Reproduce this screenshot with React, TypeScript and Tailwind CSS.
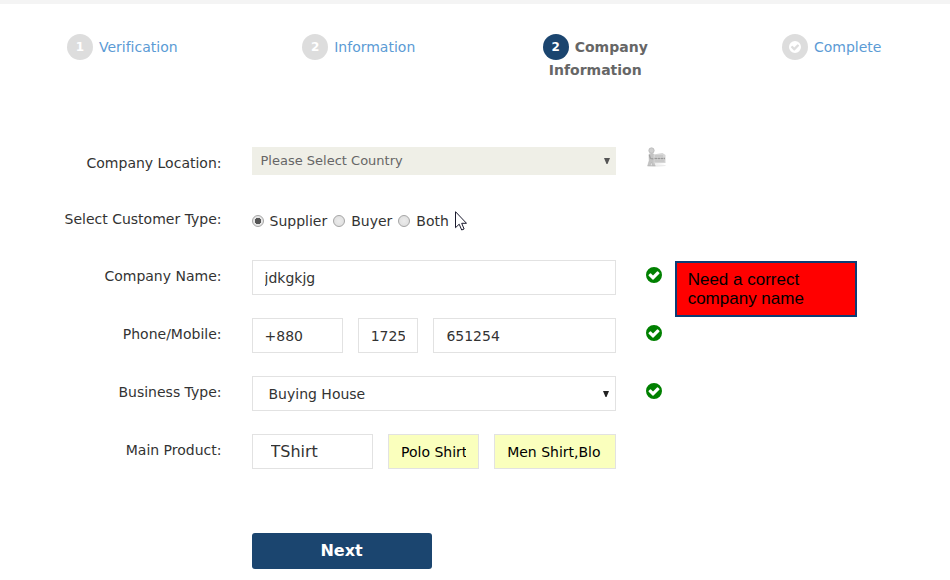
import type { ReactNode } from "react";
import clsx from "clsx";

function CheckBadge({ className }: { className: string }) {
  return (
    <svg viewBox="0 0 16 16" className={className} aria-hidden="true">
      <path
        fill="currentColor"
        fillRule="evenodd"
        d="M8 0a8 8 0 1 1 0 16A8 8 0 0 1 8 0Zm5.300 5.800-1.300-1.300a.7.7 0 0 0-1 0L7 8.500 5 6.500a.7.7 0 0 0-1 0L2.700 7.800a.7.7 0 0 0 0 1l3.800 3.700a.7.7 0 0 0 1 0l5.800-5.700a.7.7 0 0 0 0-1Z"
      />
    </svg>
  );
}

function ValidMark() {
  return (
    <div className="pt-[7px]">
      <CheckBadge className="block size-4 text-[#008000]" />
    </div>
  );
}

function HolderFigure() {
  return (
    <svg viewBox="0 0 20 20" className="block size-5" aria-hidden="true">
      <ellipse cx="11" cy="18.500" rx="9" ry="1.200" fill="#ececec" />
      <circle cx="5.500" cy="3.500" r="2.700" fill="#cfcfcf" stroke="#b4b4b4" strokeWidth=".7" />
      <path
        d="M3 7.200c1.500-1.200 4.500-1 5.200.5l.5 4-.7 2.300.8 4.500H6.200L5.500 15l-1.200 3.500H1.800l1.400-5Z"
        fill="#c4c4c4"
        stroke="#b0b0b0"
        strokeWidth=".5"
      />
      <path d="M3.500 8.500 4.500 11.500 8.500 12" fill="none" stroke="#a2a2a2" strokeWidth="1.300" strokeLinecap="round" />
      <path d="m7.500 7.500 9-1.500 3 2v8l-12 .5Z" fill="#d6d6d6" />
      <path d="M9 9h8M8.500 14h10" stroke="#bcbcbc" />
      <path d="M8.500 11.500h10.500" stroke="#999" strokeWidth="1.600" strokeDasharray="2.500 .5" />
      <path d="M1.500 18.800h8" stroke="#b8b8b8" />
    </svg>
  );
}

function SelectArrow({ className }: { className: string }) {
  return (
    <svg
      viewBox="0 0 6 6"
      className={clsx("pointer-events-none absolute top-1/2 size-1.5 -translate-y-1/2", className)}
      aria-hidden="true"
    >
      <path d="M0 0h6L3.500 6h-1Z" fill="currentColor" />
    </svg>
  );
}

function Step({ badge, label, active }: { badge: ReactNode; label: string; active?: boolean }) {
  const [first, ...rest] = label.split(" ");
  return (
    <li className="flex flex-col items-center">
      <a
        href="#"
        aria-current={active ? "step" : undefined}
        className={clsx("text-center", active ? "font-bold text-[#666]" : "text-[#5b9bd5]")}
      >
        <span className="flex items-center gap-1.5 leading-[26px]">
          <span
            className={clsx(
              "flex size-[26px] items-center justify-center rounded-full text-xs font-bold text-white",
              active ? "bg-[#1b456f]" : "bg-[#ddd]",
            )}
          >
            {badge}
          </span>
          {first}
        </span>
        {rest.length > 0 && <span className="block leading-5">{rest.join(" ")}</span>}
      </a>
    </li>
  );
}

interface RowProps {
  label: string;
  htmlFor?: string;
  className?: string;
  status?: ReactNode;
  children: ReactNode;
}

function Row({ label, htmlFor, className, status, children }: RowProps) {
  return (
    <div className={clsx("grid grid-cols-12 items-start", className)}>
      <label htmlFor={htmlFor} className="col-span-3 px-[15px] text-right leading-[33px]">
        {label}
      </label>
      <div className="col-span-5 px-[15px]">{children}</div>
      <div className="col-span-4 px-[15px]">{status}</div>
    </div>
  );
}

const box = "h-[35px] w-full min-w-0 border border-[#e2e2e2] px-3 outline-none";

export default function App() {
  return (
    <main className="border-t-4 border-[#f4f4f4] bg-white font-['DejaVu_Sans',Verdana,sans-serif] text-sm text-[#333] [font-variant-ligatures:none]">
      <ol className="grid h-[143px] grid-cols-4 pt-[30px] pl-1">
        <Step badge="1" label="Verification" />
        <Step badge="2" label="Information" />
        <Step badge="2" label="Company Information" active />
        <Step badge={<CheckBadge className="size-3" />} label="Complete" />
      </ol>

      <form className="pr-1" onSubmit={(e) => e.preventDefault()}>
        <Row label="Company Location:" htmlFor="country" status={<HolderFigure />}>
          <div className="relative">
            <select
              id="country"
              className="block h-7 w-full appearance-none bg-[#efefe7] pl-[9px] text-[13px] text-[#666] outline-none"
            >
              <option>Please Select Country</option>
            </select>
            <SelectArrow className="right-1.5 text-[#555]" />
          </div>
        </Row>

        <Row label="Select Customer Type:" className="mt-[23px]">
          <div className="flex h-[35px] items-center gap-1.5">
            {["Supplier", "Buyer", "Both"].map((type) => (
              <label key={type} className="flex items-center gap-1.5">
                <input
                  type="radio"
                  name="customerType"
                  defaultChecked={type === "Supplier"}
                  className="size-3 appearance-none rounded-full border border-[#a5a5a5] bg-[radial-gradient(circle,#ececec,#dcdcdc)] checked:bg-[radial-gradient(circle,#555_0_3px,#e6e6e6_3px)]"
                />
                {type}
              </label>
            ))}
            <svg viewBox="0 0 12 20" className="h-5 w-3" aria-hidden="true">
              <path
                d="M.5.7v16l3.700-3.500 2.500 5.800 2.400-1L6.700 12.300h4.800Z"
                fill="#fff"
                stroke="#1a1a2e"
              />
            </svg>
          </div>
        </Row>

        <Row
          label="Company Name:"
          htmlFor="company"
          className="mt-[22px]"
          status={
            <div className="relative">
              <ValidMark />
              <p
                role="alert"
                className="absolute top-px left-[29px] w-[182px] border-2 border-[#0b3d75] bg-[#f00] px-[11px] py-[7px] font-['Liberation_Sans',Arial,sans-serif] text-[17px] leading-[19px] text-black"
              >
                Need a correct company name
              </p>
            </div>
          }
        >
          <input id="company" defaultValue="jdkgkjg" className={clsx(box, "block")} />
        </Row>

        <Row label="Phone/Mobile:" htmlFor="phone" className="mt-[23px]" status={<ValidMark />}>
          <div className="grid grid-cols-[3fr_2fr_6fr] gap-[15px]">
            <input id="phone" aria-label="Country code" defaultValue="+880" className={box} />
            <input aria-label="Area code" defaultValue="1725" className={box} />
            <input aria-label="Number" defaultValue="651254" className={box} />
          </div>
        </Row>

        <Row label="Business Type:" htmlFor="business" className="mt-[23px]" status={<ValidMark />}>
          <div className="relative">
            <select
              id="business"
              className="block h-[35px] w-full appearance-none border border-[#e2e2e2] bg-white pl-4 outline-none"
            >
              <option>Buying House</option>
            </select>
            <SelectArrow className="right-[7px] text-[#222]" />
          </div>
        </Row>

        <Row label="Main Product:" htmlFor="product" className="mt-[23px]">
          <div className="grid grid-cols-[4fr_3fr_4fr] gap-[15px]">
            <input
              id="product"
              defaultValue="TShirt"
              className="h-[35px] w-full min-w-0 border border-[#e2e2e2] pl-[18px] text-base outline-none"
            />
            <input
              aria-label="Second product"
              defaultValue="Polo Shirt"
              className={clsx(box, "bg-[#faffbd] text-black")}
            />
            <input
              aria-label="Third product"
              defaultValue="Men Shirt,Blo"
              className={clsx(box, "bg-[#faffbd] text-black")}
            />
          </div>
        </Row>

        <div className="mt-16 grid grid-cols-12">
          <div className="col-span-5 col-start-4 px-[15px]">
            <button
              type="submit"
              className="h-9 w-[180px] rounded-[3px] bg-[#1b456f] text-base font-bold text-white"
            >
              Next
            </button>
          </div>
        </div>
      </form>
    </main>
  );
}
